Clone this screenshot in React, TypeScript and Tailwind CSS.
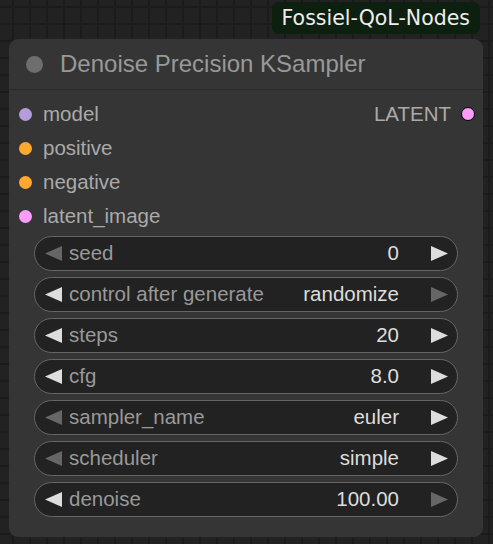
import React from "react"

const inputs = [
  { name: "model", color: "bg-[#b39ddb]" },
  { name: "positive", color: "bg-[#ffa931]" },
  { name: "negative", color: "bg-[#ffa931]" },
  { name: "latent_image", color: "bg-[#ff9cf9]" },
]

const widgets = [
  { label: "seed", value: "0", left: false, right: true },
  { label: "control after generate", value: "randomize", left: true, right: false },
  { label: "steps", value: "20", left: true, right: true },
  { label: "cfg", value: "8.0", left: true, right: true },
  { label: "sampler_name", value: "euler", left: false, right: true },
  { label: "scheduler", value: "simple", left: false, right: true },
  { label: "denoise", value: "100.00", left: true, right: false },
]

function Arrow({ dir, on }: { dir: "left" | "right"; on: boolean }) {
  const fill = on ? "#dddddd" : "#666666"
  return (
    <svg width="17" height="15" viewBox="0 0 17 15" className="shrink-0">
      {dir === "left" ? (
        <polygon points="17,0 17,15 0,7.5" fill={fill} />
      ) : (
        <polygon points="0,0 0,15 17,7.5" fill={fill} />
      )}
    </svg>
  )
}

export default function App() {
  return (
    <div className="w-[493px] h-[544px] overflow-hidden bg-[#222222] bg-[linear-gradient(to_right,#1b1b1b_2px,transparent_2px),linear-gradient(to_bottom,#1b1b1b_2px,transparent_2px)] bg-[size:17px_17px] bg-[position:12px_6px] flex flex-col font-['Liberation_Sans',Arial,sans-serif]">
      {/* badge */}
      <div className="self-end mr-[13px] mt-[2px] h-[32px] px-[10px] rounded-[7px] bg-[#0d1f0f] flex items-center">
        <span className="text-[20.5px] leading-none text-[#eeeeee] font-['DejaVu_Sans',sans-serif]">Fossiel-QoL-Nodes</span>
      </div>

      {/* node */}
      <div className="mt-[5px] ml-[9px] w-[474px] h-[498px] rounded-[9px] bg-[#353535] flex flex-col">
        <div className="h-[51px] shrink-0 border-b border-[#2b2b2b] flex items-center pl-[17px] gap-[17px]">
          <div className="w-[17px] h-[17px] rounded-full bg-[#6e6e6e]" />
          <span className="text-[24px] text-[#999999] leading-none">Denoise Precision KSampler</span>
        </div>

        <div className="pt-[7px] flex flex-col">
          {inputs.map((inp, i) => (
            <div key={inp.name} className="h-[34px] flex items-center pl-[10px] pr-[8px]">
              <div className={`w-[13px] h-[13px] rounded-full ${inp.color}`} />
              <span className="ml-[11px] text-[20.5px] leading-none text-[#aaaaaa]">{inp.name}</span>
              {i === 0 && (
                <div className="ml-auto flex items-center gap-[10px]">
                  <span className="text-[20.5px] leading-none text-[#aaaaaa]">LATENT</span>
                  <div className="w-[14px] h-[14px] rounded-full bg-[#ff9cf9] border-[1.5px] border-black" />
                </div>
              )}
            </div>
          ))}
        </div>

        <div className="mt-[3px] px-[25px] flex flex-col gap-[6px]">
          {widgets.map((w) => (
            <div
              key={w.label}
              className="h-[35px] rounded-full bg-[#222222] border-[1.5px] border-[#666666] flex items-center pl-[10px] pr-[9px]"
            >
              <Arrow dir="left" on={w.left} />
              <span className="ml-[7px] text-[20.5px] leading-none text-[#999999]">{w.label}</span>
              <span className="ml-auto text-[20.5px] leading-none text-[#dddddd]">{w.value}</span>
              <div className="ml-[32px]">
                <Arrow dir="right" on={w.right} />
              </div>
            </div>
          ))}
        </div>
      </div>
    </div>
  )
}
